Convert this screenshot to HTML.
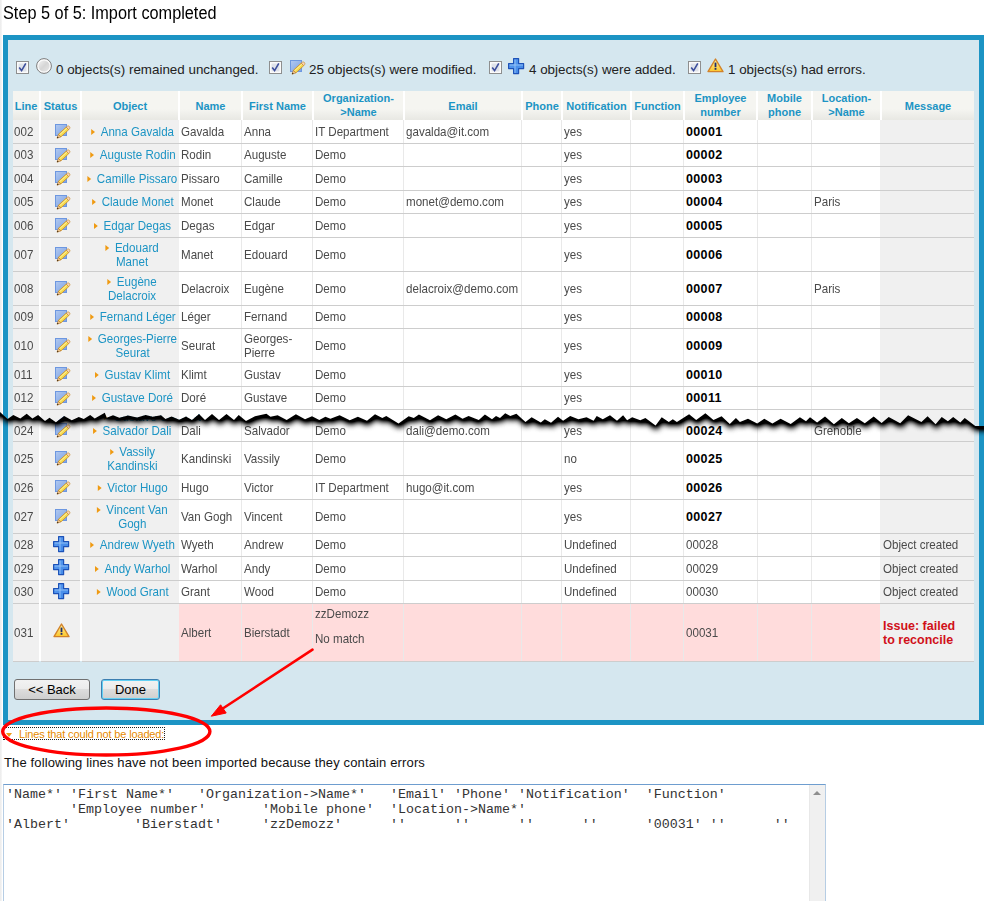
<!DOCTYPE html><html><head><meta charset="utf-8"><style>

*{margin:0;padding:0;box-sizing:border-box}
html,body{width:984px;height:901px;overflow:hidden;background:#fff}
body{position:relative;font-family:"Liberation Sans", sans-serif;color:#4a4a4a}
.a{position:absolute}
.hc{position:absolute;top:91px;height:29px;padding-top:2px;background:linear-gradient(#f5f5f1 0%,#f5f5f1 62%,#e8e8e3 100%);
  color:#1c94c4;font-weight:bold;font-size:11px;line-height:13px;text-align:center;display:flex;align-items:center;justify-content:center}
.c{position:absolute;display:flex;align-items:center;font-size:11.5px;line-height:14px;color:#4a4a4a;padding-left:1px;white-space:nowrap}
.ctr{justify-content:center;text-align:center}
.obj{color:#1c94c4;white-space:nowrap;text-align:center;justify-content:center}
.t{display:inline-block;font-size:12.2px;line-height:14px;transform:scaleX(0.95);transform-origin:0 50%}
.tc{transform-origin:50% 50%}
.tri{display:inline-block;width:0;height:0;border-left:4px solid #ef9a12;border-top:3.5px solid transparent;border-bottom:3.5px solid transparent;margin-right:6px;vertical-align:1px}
.b{font-weight:bold;color:#000;font-size:12.5px;letter-spacing:0.35px}
.sum{position:absolute;top:61px;font-size:13.4px;line-height:16px;color:#222;white-space:nowrap}

</style></head><body>
<div class="a" style="left:0;top:0;width:2px;height:901px;background:linear-gradient(90deg,#ebebeb,#f6f6f6)"></div>
<div class="a" style="left:3px;top:3px;font-size:17.5px;line-height:20px;color:#000;white-space:nowrap;transform:scaleX(0.93);transform-origin:0 50%">Step 5 of 5: Import completed</div>
<div class="a" style="left:3px;top:35px;width:981px;height:690px;border:5px solid #1c94c4;background:#d5e7ef"></div>
<div class="a" style="left:16px;top:61px"><svg width="13" height="13" viewBox="0 0 13 13" style="display:block"><rect x="0.5" y="0.5" width="12" height="12" fill="#fbfbfb" stroke="#8e8f8f"/><rect x="2.5" y="2.5" width="8" height="8" fill="#dfe3ea"/><path d="M3.2 6.4 L5.6 9.6 L9.8 2.4" fill="none" stroke="#3d4f9c" stroke-width="1.6"/></svg></div>
<div class="a" style="left:36px;top:58px"><svg width="16" height="16" viewBox="0 0 16 16" style="display:block"><defs><linearGradient id="rg" x1="0" y1="0" x2="1" y2="1"><stop offset="0" stop-color="#f2f2f2"/><stop offset="0.5" stop-color="#d6d6d6"/><stop offset="1" stop-color="#e6e6e6"/></linearGradient></defs><circle cx="8" cy="8" r="7.4" fill="#fbfbfb" stroke="#7c7c7c" stroke-width="1"/><circle cx="8" cy="8" r="5.6" fill="url(#rg)"/></svg></div>
<div class="sum" style="left:56px;top:62px">0 objects(s) remained unchanged.</div>
<div class="a" style="left:269px;top:61px"><svg width="13" height="13" viewBox="0 0 13 13" style="display:block"><rect x="0.5" y="0.5" width="12" height="12" fill="#fbfbfb" stroke="#8e8f8f"/><rect x="2.5" y="2.5" width="8" height="8" fill="#dfe3ea"/><path d="M3.2 6.4 L5.6 9.6 L9.8 2.4" fill="none" stroke="#3d4f9c" stroke-width="1.6"/></svg></div>
<div class="a" style="left:290px;top:60px"><svg width="16" height="16" viewBox="0 0 16 16" style="display:block"><defs><linearGradient id="pg1" x1="0" y1="0" x2="1" y2="1"><stop offset="0" stop-color="#b4cbf0"/><stop offset="1" stop-color="#7a9fe4"/></linearGradient></defs><rect x="0" y="0" width="12" height="12" fill="url(#pg1)"/><rect x="0.5" y="0.5" width="11" height="11" fill="none" stroke="#6d97e0" stroke-width="1"/><path d="M3.36 10.3 L11.3 3.1 L13.7 5.7 L5.8 12.96 Z" fill="#f6dc50" stroke="#c98a2a" stroke-width="0.8" stroke-linejoin="round"/><path d="M4.4 10.9 L11.9 4.1" stroke="#fff3a8" stroke-width="0.9"/><path d="M3.36 10.3 L5.8 12.96 L2 14.2 Z" fill="#f0c690" stroke="#b87828" stroke-width="0.6" stroke-linejoin="round"/><path d="M2 14.2 L2.55 12.6 L3.7 13.7 Z" fill="#2a1a08"/><path d="M11.3 3.1 L12.3 2.2 Q13.3 1.5 14.4 2.5 Q15.3 3.6 14.6 4.6 L13.7 5.7 Z" fill="#f8d4b8" stroke="#c98a2a" stroke-width="0.7"/></svg></div>
<div class="sum" style="left:309px;top:62px">25 objects(s) were modified.</div>
<div class="a" style="left:489px;top:61px"><svg width="13" height="13" viewBox="0 0 13 13" style="display:block"><rect x="0.5" y="0.5" width="12" height="12" fill="#fbfbfb" stroke="#8e8f8f"/><rect x="2.5" y="2.5" width="8" height="8" fill="#dfe3ea"/><path d="M3.2 6.4 L5.6 9.6 L9.8 2.4" fill="none" stroke="#3d4f9c" stroke-width="1.6"/></svg></div>
<div class="a" style="left:508px;top:58px"><svg width="17" height="17" viewBox="0 0 17 17" style="display:block"><defs><linearGradient id="pl2" x1="0" y1="0" x2="1" y2="1"><stop offset="0" stop-color="#5b9cf0"/><stop offset="1" stop-color="#3f86e6"/></linearGradient></defs><path d="M5.6 0.6 H10.6 V5.6 H15.6 V10.6 H10.6 V15.6 H5.6 V10.6 H0.6 V5.6 H5.6 Z" fill="url(#pl2)" stroke="#1d52b8" stroke-width="1.2" stroke-linejoin="round"/><path d="M1.6 7 H15" stroke="#9fcaf8" stroke-width="1" opacity="0.8"/><path d="M7 1.6 V15" stroke="#9fcaf8" stroke-width="1" opacity="0.8"/></svg></div>
<div class="sum" style="left:529px;top:62px">4 objects(s) were added.</div>
<div class="a" style="left:688px;top:61px"><svg width="13" height="13" viewBox="0 0 13 13" style="display:block"><rect x="0.5" y="0.5" width="12" height="12" fill="#fbfbfb" stroke="#8e8f8f"/><rect x="2.5" y="2.5" width="8" height="8" fill="#dfe3ea"/><path d="M3.2 6.4 L5.6 9.6 L9.8 2.4" fill="none" stroke="#3d4f9c" stroke-width="1.6"/></svg></div>
<div class="a" style="left:707px;top:58px"><svg width="17" height="15" viewBox="0 0 17 15" style="display:block"><defs><linearGradient id="wg3" x1="0" y1="0" x2="0" y2="1"><stop offset="0" stop-color="#fff2a0"/><stop offset="1" stop-color="#fcc62a"/></linearGradient></defs><path d="M8.5 1 L16 13.6 H1 Z" fill="url(#wg3)" stroke="#d2822a" stroke-width="1.4" stroke-linejoin="round"/><rect x="7.6" y="4.6" width="1.8" height="4.6" fill="#1e2c6e"/><rect x="7.6" y="10" width="1.8" height="1.8" fill="#1e2c6e"/></svg></div>
<div class="sum" style="left:728px;top:62px">1 objects(s) had errors.</div>
<div class="a" style="left:13px;top:91px;width:961px;height:570px;background:#fff"></div>
<div class="hc" style="left:13px;width:26px;">Line</div>
<div class="hc" style="left:41px;width:39px;">Status</div>
<div class="hc" style="left:82px;width:96px;">Object</div>
<div class="hc" style="left:180px;width:61px;">Name</div>
<div class="hc" style="left:243px;width:69px;">First Name</div>
<div class="hc" style="left:314px;width:89px;padding-top:0;line-height:13.5px">Organization-<br>&gt;Name</div>
<div class="hc" style="left:405px;width:116px;">Email</div>
<div class="hc" style="left:523px;width:38px;">Phone</div>
<div class="hc" style="left:563px;width:67px;">Notification</div>
<div class="hc" style="left:632px;width:51px;">Function</div>
<div class="hc" style="left:685px;width:71px;padding-top:0;line-height:13.5px">Employee<br>number</div>
<div class="hc" style="left:758px;width:53px;padding-top:0;line-height:13.5px">Mobile<br>phone</div>
<div class="hc" style="left:813px;width:67px;padding-top:0;line-height:13.5px">Location-<br>&gt;Name</div>
<div class="hc" style="left:882px;width:92px;">Message</div>
<div class="a" style="left:13px;top:120px;width:26px;height:23px;background:#f0f0f0"></div>
<div class="a" style="left:41px;top:120px;width:39px;height:23px;background:#f0f0f0"></div>
<div class="a" style="left:82px;top:120px;width:97px;height:23px;background:#f0f0f0"></div>
<div class="a" style="left:880px;top:120px;width:94px;height:23px;background:#f0f0f0"></div>
<div class="a" style="left:241px;top:120px;width:1px;height:23px;background:#e9e9e9"></div>
<div class="a" style="left:312px;top:120px;width:1px;height:23px;background:#e9e9e9"></div>
<div class="a" style="left:403px;top:120px;width:1px;height:23px;background:#e9e9e9"></div>
<div class="a" style="left:521px;top:120px;width:1px;height:23px;background:#e9e9e9"></div>
<div class="a" style="left:561px;top:120px;width:1px;height:23px;background:#e9e9e9"></div>
<div class="a" style="left:630px;top:120px;width:1px;height:23px;background:#e9e9e9"></div>
<div class="a" style="left:683px;top:120px;width:1px;height:23px;background:#e9e9e9"></div>
<div class="a" style="left:757px;top:120px;width:1px;height:23px;background:#e9e9e9"></div>
<div class="a" style="left:811px;top:120px;width:1px;height:23px;background:#e9e9e9"></div>
<div class="a" style="left:13px;top:143px;width:26px;height:1px;background:#cdcdcd"></div>
<div class="a" style="left:41px;top:143px;width:39px;height:1px;background:#cdcdcd"></div>
<div class="a" style="left:82px;top:143px;width:892px;height:1px;background:#cdcdcd"></div>
<div class="c" style="left:13px;top:120px;width:26px;height:23px;"><span class="t">002</span></div>
<div class="a" style="left:55px;top:124px"><svg width="16" height="16" viewBox="0 0 16 16" style="display:block"><defs><linearGradient id="pg4" x1="0" y1="0" x2="1" y2="1"><stop offset="0" stop-color="#b4cbf0"/><stop offset="1" stop-color="#7a9fe4"/></linearGradient></defs><rect x="0" y="0" width="12" height="12" fill="url(#pg4)"/><rect x="0.5" y="0.5" width="11" height="11" fill="none" stroke="#6d97e0" stroke-width="1"/><path d="M3.36 10.3 L11.3 3.1 L13.7 5.7 L5.8 12.96 Z" fill="#f6dc50" stroke="#c98a2a" stroke-width="0.8" stroke-linejoin="round"/><path d="M4.4 10.9 L11.9 4.1" stroke="#fff3a8" stroke-width="0.9"/><path d="M3.36 10.3 L5.8 12.96 L2 14.2 Z" fill="#f0c690" stroke="#b87828" stroke-width="0.6" stroke-linejoin="round"/><path d="M2 14.2 L2.55 12.6 L3.7 13.7 Z" fill="#2a1a08"/><path d="M11.3 3.1 L12.3 2.2 Q13.3 1.5 14.4 2.5 Q15.3 3.6 14.6 4.6 L13.7 5.7 Z" fill="#f8d4b8" stroke="#c98a2a" stroke-width="0.7"/></svg></div>
<div class="c obj" style="left:82px;top:120px;width:97px;height:23px;padding:0 0 0 4px;"><span class="t tc"><span class="tri"></span>Anna Gavalda</span></div>
<div class="c" style="left:180px;top:120px;width:61px;height:23px;"><span class="t">Gavalda</span></div>
<div class="c" style="left:243px;top:120px;width:69px;height:23px;"><span class="t">Anna</span></div>
<div class="c" style="left:314px;top:120px;width:89px;height:23px;"><span class="t">IT Department</span></div>
<div class="c" style="left:405px;top:120px;width:116px;height:23px;"><span class="t">gavalda@it.com</span></div>
<div class="c" style="left:563px;top:120px;width:67px;height:23px;"><span class="t">yes</span></div>
<div class="c" style="left:685px;top:120px;width:72px;height:23px;"><span class="b">00001</span></div>
<div class="c" style="left:813px;top:120px;width:67px;height:23px;"></div>
<div class="c" style="left:882px;top:120px;width:92px;height:23px;"></div>
<div class="a" style="left:13px;top:144px;width:26px;height:22px;background:#f0f0f0"></div>
<div class="a" style="left:41px;top:144px;width:39px;height:22px;background:#f0f0f0"></div>
<div class="a" style="left:82px;top:144px;width:97px;height:22px;background:#f0f0f0"></div>
<div class="a" style="left:880px;top:144px;width:94px;height:22px;background:#f0f0f0"></div>
<div class="a" style="left:241px;top:144px;width:1px;height:22px;background:#e9e9e9"></div>
<div class="a" style="left:312px;top:144px;width:1px;height:22px;background:#e9e9e9"></div>
<div class="a" style="left:403px;top:144px;width:1px;height:22px;background:#e9e9e9"></div>
<div class="a" style="left:521px;top:144px;width:1px;height:22px;background:#e9e9e9"></div>
<div class="a" style="left:561px;top:144px;width:1px;height:22px;background:#e9e9e9"></div>
<div class="a" style="left:630px;top:144px;width:1px;height:22px;background:#e9e9e9"></div>
<div class="a" style="left:683px;top:144px;width:1px;height:22px;background:#e9e9e9"></div>
<div class="a" style="left:757px;top:144px;width:1px;height:22px;background:#e9e9e9"></div>
<div class="a" style="left:811px;top:144px;width:1px;height:22px;background:#e9e9e9"></div>
<div class="a" style="left:13px;top:166px;width:26px;height:1px;background:#cdcdcd"></div>
<div class="a" style="left:41px;top:166px;width:39px;height:1px;background:#cdcdcd"></div>
<div class="a" style="left:82px;top:166px;width:892px;height:1px;background:#cdcdcd"></div>
<div class="c" style="left:13px;top:144px;width:26px;height:22px;"><span class="t">003</span></div>
<div class="a" style="left:55px;top:148px"><svg width="16" height="16" viewBox="0 0 16 16" style="display:block"><defs><linearGradient id="pg5" x1="0" y1="0" x2="1" y2="1"><stop offset="0" stop-color="#b4cbf0"/><stop offset="1" stop-color="#7a9fe4"/></linearGradient></defs><rect x="0" y="0" width="12" height="12" fill="url(#pg5)"/><rect x="0.5" y="0.5" width="11" height="11" fill="none" stroke="#6d97e0" stroke-width="1"/><path d="M3.36 10.3 L11.3 3.1 L13.7 5.7 L5.8 12.96 Z" fill="#f6dc50" stroke="#c98a2a" stroke-width="0.8" stroke-linejoin="round"/><path d="M4.4 10.9 L11.9 4.1" stroke="#fff3a8" stroke-width="0.9"/><path d="M3.36 10.3 L5.8 12.96 L2 14.2 Z" fill="#f0c690" stroke="#b87828" stroke-width="0.6" stroke-linejoin="round"/><path d="M2 14.2 L2.55 12.6 L3.7 13.7 Z" fill="#2a1a08"/><path d="M11.3 3.1 L12.3 2.2 Q13.3 1.5 14.4 2.5 Q15.3 3.6 14.6 4.6 L13.7 5.7 Z" fill="#f8d4b8" stroke="#c98a2a" stroke-width="0.7"/></svg></div>
<div class="c obj" style="left:82px;top:144px;width:97px;height:22px;padding:0 0 0 4px;"><span class="t tc"><span class="tri"></span>Auguste Rodin</span></div>
<div class="c" style="left:180px;top:144px;width:61px;height:22px;"><span class="t">Rodin</span></div>
<div class="c" style="left:243px;top:144px;width:69px;height:22px;"><span class="t">Auguste</span></div>
<div class="c" style="left:314px;top:144px;width:89px;height:22px;"><span class="t">Demo</span></div>
<div class="c" style="left:405px;top:144px;width:116px;height:22px;"></div>
<div class="c" style="left:563px;top:144px;width:67px;height:22px;"><span class="t">yes</span></div>
<div class="c" style="left:685px;top:144px;width:72px;height:22px;"><span class="b">00002</span></div>
<div class="c" style="left:813px;top:144px;width:67px;height:22px;"></div>
<div class="c" style="left:882px;top:144px;width:92px;height:22px;"></div>
<div class="a" style="left:13px;top:167px;width:26px;height:23px;background:#f0f0f0"></div>
<div class="a" style="left:41px;top:167px;width:39px;height:23px;background:#f0f0f0"></div>
<div class="a" style="left:82px;top:167px;width:97px;height:23px;background:#f0f0f0"></div>
<div class="a" style="left:880px;top:167px;width:94px;height:23px;background:#f0f0f0"></div>
<div class="a" style="left:241px;top:167px;width:1px;height:23px;background:#e9e9e9"></div>
<div class="a" style="left:312px;top:167px;width:1px;height:23px;background:#e9e9e9"></div>
<div class="a" style="left:403px;top:167px;width:1px;height:23px;background:#e9e9e9"></div>
<div class="a" style="left:521px;top:167px;width:1px;height:23px;background:#e9e9e9"></div>
<div class="a" style="left:561px;top:167px;width:1px;height:23px;background:#e9e9e9"></div>
<div class="a" style="left:630px;top:167px;width:1px;height:23px;background:#e9e9e9"></div>
<div class="a" style="left:683px;top:167px;width:1px;height:23px;background:#e9e9e9"></div>
<div class="a" style="left:757px;top:167px;width:1px;height:23px;background:#e9e9e9"></div>
<div class="a" style="left:811px;top:167px;width:1px;height:23px;background:#e9e9e9"></div>
<div class="a" style="left:13px;top:190px;width:26px;height:1px;background:#cdcdcd"></div>
<div class="a" style="left:41px;top:190px;width:39px;height:1px;background:#cdcdcd"></div>
<div class="a" style="left:82px;top:190px;width:892px;height:1px;background:#cdcdcd"></div>
<div class="c" style="left:13px;top:167px;width:26px;height:23px;"><span class="t">004</span></div>
<div class="a" style="left:55px;top:171px"><svg width="16" height="16" viewBox="0 0 16 16" style="display:block"><defs><linearGradient id="pg6" x1="0" y1="0" x2="1" y2="1"><stop offset="0" stop-color="#b4cbf0"/><stop offset="1" stop-color="#7a9fe4"/></linearGradient></defs><rect x="0" y="0" width="12" height="12" fill="url(#pg6)"/><rect x="0.5" y="0.5" width="11" height="11" fill="none" stroke="#6d97e0" stroke-width="1"/><path d="M3.36 10.3 L11.3 3.1 L13.7 5.7 L5.8 12.96 Z" fill="#f6dc50" stroke="#c98a2a" stroke-width="0.8" stroke-linejoin="round"/><path d="M4.4 10.9 L11.9 4.1" stroke="#fff3a8" stroke-width="0.9"/><path d="M3.36 10.3 L5.8 12.96 L2 14.2 Z" fill="#f0c690" stroke="#b87828" stroke-width="0.6" stroke-linejoin="round"/><path d="M2 14.2 L2.55 12.6 L3.7 13.7 Z" fill="#2a1a08"/><path d="M11.3 3.1 L12.3 2.2 Q13.3 1.5 14.4 2.5 Q15.3 3.6 14.6 4.6 L13.7 5.7 Z" fill="#f8d4b8" stroke="#c98a2a" stroke-width="0.7"/></svg></div>
<div class="c obj" style="left:82px;top:167px;width:97px;height:23px;padding:0 0 0 4px;"><span class="t tc"><span class="tri"></span>Camille Pissaro</span></div>
<div class="c" style="left:180px;top:167px;width:61px;height:23px;"><span class="t">Pissaro</span></div>
<div class="c" style="left:243px;top:167px;width:69px;height:23px;"><span class="t">Camille</span></div>
<div class="c" style="left:314px;top:167px;width:89px;height:23px;"><span class="t">Demo</span></div>
<div class="c" style="left:405px;top:167px;width:116px;height:23px;"></div>
<div class="c" style="left:563px;top:167px;width:67px;height:23px;"><span class="t">yes</span></div>
<div class="c" style="left:685px;top:167px;width:72px;height:23px;"><span class="b">00003</span></div>
<div class="c" style="left:813px;top:167px;width:67px;height:23px;"></div>
<div class="c" style="left:882px;top:167px;width:92px;height:23px;"></div>
<div class="a" style="left:13px;top:191px;width:26px;height:22px;background:#f0f0f0"></div>
<div class="a" style="left:41px;top:191px;width:39px;height:22px;background:#f0f0f0"></div>
<div class="a" style="left:82px;top:191px;width:97px;height:22px;background:#f0f0f0"></div>
<div class="a" style="left:880px;top:191px;width:94px;height:22px;background:#f0f0f0"></div>
<div class="a" style="left:241px;top:191px;width:1px;height:22px;background:#e9e9e9"></div>
<div class="a" style="left:312px;top:191px;width:1px;height:22px;background:#e9e9e9"></div>
<div class="a" style="left:403px;top:191px;width:1px;height:22px;background:#e9e9e9"></div>
<div class="a" style="left:521px;top:191px;width:1px;height:22px;background:#e9e9e9"></div>
<div class="a" style="left:561px;top:191px;width:1px;height:22px;background:#e9e9e9"></div>
<div class="a" style="left:630px;top:191px;width:1px;height:22px;background:#e9e9e9"></div>
<div class="a" style="left:683px;top:191px;width:1px;height:22px;background:#e9e9e9"></div>
<div class="a" style="left:757px;top:191px;width:1px;height:22px;background:#e9e9e9"></div>
<div class="a" style="left:811px;top:191px;width:1px;height:22px;background:#e9e9e9"></div>
<div class="a" style="left:13px;top:213px;width:26px;height:1px;background:#cdcdcd"></div>
<div class="a" style="left:41px;top:213px;width:39px;height:1px;background:#cdcdcd"></div>
<div class="a" style="left:82px;top:213px;width:892px;height:1px;background:#cdcdcd"></div>
<div class="c" style="left:13px;top:191px;width:26px;height:22px;"><span class="t">005</span></div>
<div class="a" style="left:55px;top:195px"><svg width="16" height="16" viewBox="0 0 16 16" style="display:block"><defs><linearGradient id="pg7" x1="0" y1="0" x2="1" y2="1"><stop offset="0" stop-color="#b4cbf0"/><stop offset="1" stop-color="#7a9fe4"/></linearGradient></defs><rect x="0" y="0" width="12" height="12" fill="url(#pg7)"/><rect x="0.5" y="0.5" width="11" height="11" fill="none" stroke="#6d97e0" stroke-width="1"/><path d="M3.36 10.3 L11.3 3.1 L13.7 5.7 L5.8 12.96 Z" fill="#f6dc50" stroke="#c98a2a" stroke-width="0.8" stroke-linejoin="round"/><path d="M4.4 10.9 L11.9 4.1" stroke="#fff3a8" stroke-width="0.9"/><path d="M3.36 10.3 L5.8 12.96 L2 14.2 Z" fill="#f0c690" stroke="#b87828" stroke-width="0.6" stroke-linejoin="round"/><path d="M2 14.2 L2.55 12.6 L3.7 13.7 Z" fill="#2a1a08"/><path d="M11.3 3.1 L12.3 2.2 Q13.3 1.5 14.4 2.5 Q15.3 3.6 14.6 4.6 L13.7 5.7 Z" fill="#f8d4b8" stroke="#c98a2a" stroke-width="0.7"/></svg></div>
<div class="c obj" style="left:82px;top:191px;width:97px;height:22px;padding:0 0 0 4px;"><span class="t tc"><span class="tri"></span>Claude Monet</span></div>
<div class="c" style="left:180px;top:191px;width:61px;height:22px;"><span class="t">Monet</span></div>
<div class="c" style="left:243px;top:191px;width:69px;height:22px;"><span class="t">Claude</span></div>
<div class="c" style="left:314px;top:191px;width:89px;height:22px;"><span class="t">Demo</span></div>
<div class="c" style="left:405px;top:191px;width:116px;height:22px;"><span class="t">monet@demo.com</span></div>
<div class="c" style="left:563px;top:191px;width:67px;height:22px;"><span class="t">yes</span></div>
<div class="c" style="left:685px;top:191px;width:72px;height:22px;"><span class="b">00004</span></div>
<div class="c" style="left:813px;top:191px;width:67px;height:22px;"><span class="t">Paris</span></div>
<div class="c" style="left:882px;top:191px;width:92px;height:22px;"></div>
<div class="a" style="left:13px;top:214px;width:26px;height:23px;background:#f0f0f0"></div>
<div class="a" style="left:41px;top:214px;width:39px;height:23px;background:#f0f0f0"></div>
<div class="a" style="left:82px;top:214px;width:97px;height:23px;background:#f0f0f0"></div>
<div class="a" style="left:880px;top:214px;width:94px;height:23px;background:#f0f0f0"></div>
<div class="a" style="left:241px;top:214px;width:1px;height:23px;background:#e9e9e9"></div>
<div class="a" style="left:312px;top:214px;width:1px;height:23px;background:#e9e9e9"></div>
<div class="a" style="left:403px;top:214px;width:1px;height:23px;background:#e9e9e9"></div>
<div class="a" style="left:521px;top:214px;width:1px;height:23px;background:#e9e9e9"></div>
<div class="a" style="left:561px;top:214px;width:1px;height:23px;background:#e9e9e9"></div>
<div class="a" style="left:630px;top:214px;width:1px;height:23px;background:#e9e9e9"></div>
<div class="a" style="left:683px;top:214px;width:1px;height:23px;background:#e9e9e9"></div>
<div class="a" style="left:757px;top:214px;width:1px;height:23px;background:#e9e9e9"></div>
<div class="a" style="left:811px;top:214px;width:1px;height:23px;background:#e9e9e9"></div>
<div class="a" style="left:13px;top:237px;width:26px;height:1px;background:#cdcdcd"></div>
<div class="a" style="left:41px;top:237px;width:39px;height:1px;background:#cdcdcd"></div>
<div class="a" style="left:82px;top:237px;width:892px;height:1px;background:#cdcdcd"></div>
<div class="c" style="left:13px;top:214px;width:26px;height:23px;"><span class="t">006</span></div>
<div class="a" style="left:55px;top:218px"><svg width="16" height="16" viewBox="0 0 16 16" style="display:block"><defs><linearGradient id="pg8" x1="0" y1="0" x2="1" y2="1"><stop offset="0" stop-color="#b4cbf0"/><stop offset="1" stop-color="#7a9fe4"/></linearGradient></defs><rect x="0" y="0" width="12" height="12" fill="url(#pg8)"/><rect x="0.5" y="0.5" width="11" height="11" fill="none" stroke="#6d97e0" stroke-width="1"/><path d="M3.36 10.3 L11.3 3.1 L13.7 5.7 L5.8 12.96 Z" fill="#f6dc50" stroke="#c98a2a" stroke-width="0.8" stroke-linejoin="round"/><path d="M4.4 10.9 L11.9 4.1" stroke="#fff3a8" stroke-width="0.9"/><path d="M3.36 10.3 L5.8 12.96 L2 14.2 Z" fill="#f0c690" stroke="#b87828" stroke-width="0.6" stroke-linejoin="round"/><path d="M2 14.2 L2.55 12.6 L3.7 13.7 Z" fill="#2a1a08"/><path d="M11.3 3.1 L12.3 2.2 Q13.3 1.5 14.4 2.5 Q15.3 3.6 14.6 4.6 L13.7 5.7 Z" fill="#f8d4b8" stroke="#c98a2a" stroke-width="0.7"/></svg></div>
<div class="c obj" style="left:82px;top:214px;width:97px;height:23px;padding:0 0 0 4px;"><span class="t tc"><span class="tri"></span>Edgar Degas</span></div>
<div class="c" style="left:180px;top:214px;width:61px;height:23px;"><span class="t">Degas</span></div>
<div class="c" style="left:243px;top:214px;width:69px;height:23px;"><span class="t">Edgar</span></div>
<div class="c" style="left:314px;top:214px;width:89px;height:23px;"><span class="t">Demo</span></div>
<div class="c" style="left:405px;top:214px;width:116px;height:23px;"></div>
<div class="c" style="left:563px;top:214px;width:67px;height:23px;"><span class="t">yes</span></div>
<div class="c" style="left:685px;top:214px;width:72px;height:23px;"><span class="b">00005</span></div>
<div class="c" style="left:813px;top:214px;width:67px;height:23px;"></div>
<div class="c" style="left:882px;top:214px;width:92px;height:23px;"></div>
<div class="a" style="left:13px;top:238px;width:26px;height:33px;background:#f0f0f0"></div>
<div class="a" style="left:41px;top:238px;width:39px;height:33px;background:#f0f0f0"></div>
<div class="a" style="left:82px;top:238px;width:97px;height:33px;background:#f0f0f0"></div>
<div class="a" style="left:880px;top:238px;width:94px;height:33px;background:#f0f0f0"></div>
<div class="a" style="left:241px;top:238px;width:1px;height:33px;background:#e9e9e9"></div>
<div class="a" style="left:312px;top:238px;width:1px;height:33px;background:#e9e9e9"></div>
<div class="a" style="left:403px;top:238px;width:1px;height:33px;background:#e9e9e9"></div>
<div class="a" style="left:521px;top:238px;width:1px;height:33px;background:#e9e9e9"></div>
<div class="a" style="left:561px;top:238px;width:1px;height:33px;background:#e9e9e9"></div>
<div class="a" style="left:630px;top:238px;width:1px;height:33px;background:#e9e9e9"></div>
<div class="a" style="left:683px;top:238px;width:1px;height:33px;background:#e9e9e9"></div>
<div class="a" style="left:757px;top:238px;width:1px;height:33px;background:#e9e9e9"></div>
<div class="a" style="left:811px;top:238px;width:1px;height:33px;background:#e9e9e9"></div>
<div class="a" style="left:13px;top:271px;width:26px;height:1px;background:#cdcdcd"></div>
<div class="a" style="left:41px;top:271px;width:39px;height:1px;background:#cdcdcd"></div>
<div class="a" style="left:82px;top:271px;width:892px;height:1px;background:#cdcdcd"></div>
<div class="c" style="left:13px;top:238px;width:26px;height:33px;"><span class="t">007</span></div>
<div class="a" style="left:55px;top:247px"><svg width="16" height="16" viewBox="0 0 16 16" style="display:block"><defs><linearGradient id="pg9" x1="0" y1="0" x2="1" y2="1"><stop offset="0" stop-color="#b4cbf0"/><stop offset="1" stop-color="#7a9fe4"/></linearGradient></defs><rect x="0" y="0" width="12" height="12" fill="url(#pg9)"/><rect x="0.5" y="0.5" width="11" height="11" fill="none" stroke="#6d97e0" stroke-width="1"/><path d="M3.36 10.3 L11.3 3.1 L13.7 5.7 L5.8 12.96 Z" fill="#f6dc50" stroke="#c98a2a" stroke-width="0.8" stroke-linejoin="round"/><path d="M4.4 10.9 L11.9 4.1" stroke="#fff3a8" stroke-width="0.9"/><path d="M3.36 10.3 L5.8 12.96 L2 14.2 Z" fill="#f0c690" stroke="#b87828" stroke-width="0.6" stroke-linejoin="round"/><path d="M2 14.2 L2.55 12.6 L3.7 13.7 Z" fill="#2a1a08"/><path d="M11.3 3.1 L12.3 2.2 Q13.3 1.5 14.4 2.5 Q15.3 3.6 14.6 4.6 L13.7 5.7 Z" fill="#f8d4b8" stroke="#c98a2a" stroke-width="0.7"/></svg></div>
<div class="c obj" style="left:82px;top:238px;width:97px;height:33px;padding:0 0 0 4px;"><span class="t tc"><span class="tri"></span>Edouard<br>Manet</span></div>
<div class="c" style="left:180px;top:238px;width:61px;height:33px;"><span class="t">Manet</span></div>
<div class="c" style="left:243px;top:238px;width:69px;height:33px;"><span class="t">Edouard</span></div>
<div class="c" style="left:314px;top:238px;width:89px;height:33px;"><span class="t">Demo</span></div>
<div class="c" style="left:405px;top:238px;width:116px;height:33px;"></div>
<div class="c" style="left:563px;top:238px;width:67px;height:33px;"><span class="t">yes</span></div>
<div class="c" style="left:685px;top:238px;width:72px;height:33px;"><span class="b">00006</span></div>
<div class="c" style="left:813px;top:238px;width:67px;height:33px;"></div>
<div class="c" style="left:882px;top:238px;width:92px;height:33px;"></div>
<div class="a" style="left:13px;top:272px;width:26px;height:33px;background:#f0f0f0"></div>
<div class="a" style="left:41px;top:272px;width:39px;height:33px;background:#f0f0f0"></div>
<div class="a" style="left:82px;top:272px;width:97px;height:33px;background:#f0f0f0"></div>
<div class="a" style="left:880px;top:272px;width:94px;height:33px;background:#f0f0f0"></div>
<div class="a" style="left:241px;top:272px;width:1px;height:33px;background:#e9e9e9"></div>
<div class="a" style="left:312px;top:272px;width:1px;height:33px;background:#e9e9e9"></div>
<div class="a" style="left:403px;top:272px;width:1px;height:33px;background:#e9e9e9"></div>
<div class="a" style="left:521px;top:272px;width:1px;height:33px;background:#e9e9e9"></div>
<div class="a" style="left:561px;top:272px;width:1px;height:33px;background:#e9e9e9"></div>
<div class="a" style="left:630px;top:272px;width:1px;height:33px;background:#e9e9e9"></div>
<div class="a" style="left:683px;top:272px;width:1px;height:33px;background:#e9e9e9"></div>
<div class="a" style="left:757px;top:272px;width:1px;height:33px;background:#e9e9e9"></div>
<div class="a" style="left:811px;top:272px;width:1px;height:33px;background:#e9e9e9"></div>
<div class="a" style="left:13px;top:305px;width:26px;height:1px;background:#cdcdcd"></div>
<div class="a" style="left:41px;top:305px;width:39px;height:1px;background:#cdcdcd"></div>
<div class="a" style="left:82px;top:305px;width:892px;height:1px;background:#cdcdcd"></div>
<div class="c" style="left:13px;top:272px;width:26px;height:33px;"><span class="t">008</span></div>
<div class="a" style="left:55px;top:281px"><svg width="16" height="16" viewBox="0 0 16 16" style="display:block"><defs><linearGradient id="pg10" x1="0" y1="0" x2="1" y2="1"><stop offset="0" stop-color="#b4cbf0"/><stop offset="1" stop-color="#7a9fe4"/></linearGradient></defs><rect x="0" y="0" width="12" height="12" fill="url(#pg10)"/><rect x="0.5" y="0.5" width="11" height="11" fill="none" stroke="#6d97e0" stroke-width="1"/><path d="M3.36 10.3 L11.3 3.1 L13.7 5.7 L5.8 12.96 Z" fill="#f6dc50" stroke="#c98a2a" stroke-width="0.8" stroke-linejoin="round"/><path d="M4.4 10.9 L11.9 4.1" stroke="#fff3a8" stroke-width="0.9"/><path d="M3.36 10.3 L5.8 12.96 L2 14.2 Z" fill="#f0c690" stroke="#b87828" stroke-width="0.6" stroke-linejoin="round"/><path d="M2 14.2 L2.55 12.6 L3.7 13.7 Z" fill="#2a1a08"/><path d="M11.3 3.1 L12.3 2.2 Q13.3 1.5 14.4 2.5 Q15.3 3.6 14.6 4.6 L13.7 5.7 Z" fill="#f8d4b8" stroke="#c98a2a" stroke-width="0.7"/></svg></div>
<div class="c obj" style="left:82px;top:272px;width:97px;height:33px;padding:0 0 0 4px;"><span class="t tc"><span class="tri"></span>Eugène<br>Delacroix</span></div>
<div class="c" style="left:180px;top:272px;width:61px;height:33px;"><span class="t">Delacroix</span></div>
<div class="c" style="left:243px;top:272px;width:69px;height:33px;"><span class="t">Eugène</span></div>
<div class="c" style="left:314px;top:272px;width:89px;height:33px;"><span class="t">Demo</span></div>
<div class="c" style="left:405px;top:272px;width:116px;height:33px;"><span class="t">delacroix@demo.com</span></div>
<div class="c" style="left:563px;top:272px;width:67px;height:33px;"><span class="t">yes</span></div>
<div class="c" style="left:685px;top:272px;width:72px;height:33px;"><span class="b">00007</span></div>
<div class="c" style="left:813px;top:272px;width:67px;height:33px;"><span class="t">Paris</span></div>
<div class="c" style="left:882px;top:272px;width:92px;height:33px;"></div>
<div class="a" style="left:13px;top:306px;width:26px;height:22px;background:#f0f0f0"></div>
<div class="a" style="left:41px;top:306px;width:39px;height:22px;background:#f0f0f0"></div>
<div class="a" style="left:82px;top:306px;width:97px;height:22px;background:#f0f0f0"></div>
<div class="a" style="left:880px;top:306px;width:94px;height:22px;background:#f0f0f0"></div>
<div class="a" style="left:241px;top:306px;width:1px;height:22px;background:#e9e9e9"></div>
<div class="a" style="left:312px;top:306px;width:1px;height:22px;background:#e9e9e9"></div>
<div class="a" style="left:403px;top:306px;width:1px;height:22px;background:#e9e9e9"></div>
<div class="a" style="left:521px;top:306px;width:1px;height:22px;background:#e9e9e9"></div>
<div class="a" style="left:561px;top:306px;width:1px;height:22px;background:#e9e9e9"></div>
<div class="a" style="left:630px;top:306px;width:1px;height:22px;background:#e9e9e9"></div>
<div class="a" style="left:683px;top:306px;width:1px;height:22px;background:#e9e9e9"></div>
<div class="a" style="left:757px;top:306px;width:1px;height:22px;background:#e9e9e9"></div>
<div class="a" style="left:811px;top:306px;width:1px;height:22px;background:#e9e9e9"></div>
<div class="a" style="left:13px;top:328px;width:26px;height:1px;background:#cdcdcd"></div>
<div class="a" style="left:41px;top:328px;width:39px;height:1px;background:#cdcdcd"></div>
<div class="a" style="left:82px;top:328px;width:892px;height:1px;background:#cdcdcd"></div>
<div class="c" style="left:13px;top:306px;width:26px;height:22px;"><span class="t">009</span></div>
<div class="a" style="left:55px;top:310px"><svg width="16" height="16" viewBox="0 0 16 16" style="display:block"><defs><linearGradient id="pg11" x1="0" y1="0" x2="1" y2="1"><stop offset="0" stop-color="#b4cbf0"/><stop offset="1" stop-color="#7a9fe4"/></linearGradient></defs><rect x="0" y="0" width="12" height="12" fill="url(#pg11)"/><rect x="0.5" y="0.5" width="11" height="11" fill="none" stroke="#6d97e0" stroke-width="1"/><path d="M3.36 10.3 L11.3 3.1 L13.7 5.7 L5.8 12.96 Z" fill="#f6dc50" stroke="#c98a2a" stroke-width="0.8" stroke-linejoin="round"/><path d="M4.4 10.9 L11.9 4.1" stroke="#fff3a8" stroke-width="0.9"/><path d="M3.36 10.3 L5.8 12.96 L2 14.2 Z" fill="#f0c690" stroke="#b87828" stroke-width="0.6" stroke-linejoin="round"/><path d="M2 14.2 L2.55 12.6 L3.7 13.7 Z" fill="#2a1a08"/><path d="M11.3 3.1 L12.3 2.2 Q13.3 1.5 14.4 2.5 Q15.3 3.6 14.6 4.6 L13.7 5.7 Z" fill="#f8d4b8" stroke="#c98a2a" stroke-width="0.7"/></svg></div>
<div class="c obj" style="left:82px;top:306px;width:97px;height:22px;padding:0 0 0 4px;"><span class="t tc"><span class="tri"></span>Fernand Léger</span></div>
<div class="c" style="left:180px;top:306px;width:61px;height:22px;"><span class="t">Léger</span></div>
<div class="c" style="left:243px;top:306px;width:69px;height:22px;"><span class="t">Fernand</span></div>
<div class="c" style="left:314px;top:306px;width:89px;height:22px;"><span class="t">Demo</span></div>
<div class="c" style="left:405px;top:306px;width:116px;height:22px;"></div>
<div class="c" style="left:563px;top:306px;width:67px;height:22px;"><span class="t">yes</span></div>
<div class="c" style="left:685px;top:306px;width:72px;height:22px;"><span class="b">00008</span></div>
<div class="c" style="left:813px;top:306px;width:67px;height:22px;"></div>
<div class="c" style="left:882px;top:306px;width:92px;height:22px;"></div>
<div class="a" style="left:13px;top:329px;width:26px;height:33px;background:#f0f0f0"></div>
<div class="a" style="left:41px;top:329px;width:39px;height:33px;background:#f0f0f0"></div>
<div class="a" style="left:82px;top:329px;width:97px;height:33px;background:#f0f0f0"></div>
<div class="a" style="left:880px;top:329px;width:94px;height:33px;background:#f0f0f0"></div>
<div class="a" style="left:241px;top:329px;width:1px;height:33px;background:#e9e9e9"></div>
<div class="a" style="left:312px;top:329px;width:1px;height:33px;background:#e9e9e9"></div>
<div class="a" style="left:403px;top:329px;width:1px;height:33px;background:#e9e9e9"></div>
<div class="a" style="left:521px;top:329px;width:1px;height:33px;background:#e9e9e9"></div>
<div class="a" style="left:561px;top:329px;width:1px;height:33px;background:#e9e9e9"></div>
<div class="a" style="left:630px;top:329px;width:1px;height:33px;background:#e9e9e9"></div>
<div class="a" style="left:683px;top:329px;width:1px;height:33px;background:#e9e9e9"></div>
<div class="a" style="left:757px;top:329px;width:1px;height:33px;background:#e9e9e9"></div>
<div class="a" style="left:811px;top:329px;width:1px;height:33px;background:#e9e9e9"></div>
<div class="a" style="left:13px;top:362px;width:26px;height:1px;background:#cdcdcd"></div>
<div class="a" style="left:41px;top:362px;width:39px;height:1px;background:#cdcdcd"></div>
<div class="a" style="left:82px;top:362px;width:892px;height:1px;background:#cdcdcd"></div>
<div class="c" style="left:13px;top:329px;width:26px;height:33px;"><span class="t">010</span></div>
<div class="a" style="left:55px;top:338px"><svg width="16" height="16" viewBox="0 0 16 16" style="display:block"><defs><linearGradient id="pg12" x1="0" y1="0" x2="1" y2="1"><stop offset="0" stop-color="#b4cbf0"/><stop offset="1" stop-color="#7a9fe4"/></linearGradient></defs><rect x="0" y="0" width="12" height="12" fill="url(#pg12)"/><rect x="0.5" y="0.5" width="11" height="11" fill="none" stroke="#6d97e0" stroke-width="1"/><path d="M3.36 10.3 L11.3 3.1 L13.7 5.7 L5.8 12.96 Z" fill="#f6dc50" stroke="#c98a2a" stroke-width="0.8" stroke-linejoin="round"/><path d="M4.4 10.9 L11.9 4.1" stroke="#fff3a8" stroke-width="0.9"/><path d="M3.36 10.3 L5.8 12.96 L2 14.2 Z" fill="#f0c690" stroke="#b87828" stroke-width="0.6" stroke-linejoin="round"/><path d="M2 14.2 L2.55 12.6 L3.7 13.7 Z" fill="#2a1a08"/><path d="M11.3 3.1 L12.3 2.2 Q13.3 1.5 14.4 2.5 Q15.3 3.6 14.6 4.6 L13.7 5.7 Z" fill="#f8d4b8" stroke="#c98a2a" stroke-width="0.7"/></svg></div>
<div class="c obj" style="left:82px;top:329px;width:97px;height:33px;padding:0 0 0 4px;"><span class="t tc"><span class="tri"></span>Georges-Pierre<br>Seurat</span></div>
<div class="c" style="left:180px;top:329px;width:61px;height:33px;"><span class="t">Seurat</span></div>
<div class="c" style="left:243px;top:329px;width:69px;height:33px;"><span class="t">Georges-<br>Pierre</span></div>
<div class="c" style="left:314px;top:329px;width:89px;height:33px;"><span class="t">Demo</span></div>
<div class="c" style="left:405px;top:329px;width:116px;height:33px;"></div>
<div class="c" style="left:563px;top:329px;width:67px;height:33px;"><span class="t">yes</span></div>
<div class="c" style="left:685px;top:329px;width:72px;height:33px;"><span class="b">00009</span></div>
<div class="c" style="left:813px;top:329px;width:67px;height:33px;"></div>
<div class="c" style="left:882px;top:329px;width:92px;height:33px;"></div>
<div class="a" style="left:13px;top:363px;width:26px;height:23px;background:#f0f0f0"></div>
<div class="a" style="left:41px;top:363px;width:39px;height:23px;background:#f0f0f0"></div>
<div class="a" style="left:82px;top:363px;width:97px;height:23px;background:#f0f0f0"></div>
<div class="a" style="left:880px;top:363px;width:94px;height:23px;background:#f0f0f0"></div>
<div class="a" style="left:241px;top:363px;width:1px;height:23px;background:#e9e9e9"></div>
<div class="a" style="left:312px;top:363px;width:1px;height:23px;background:#e9e9e9"></div>
<div class="a" style="left:403px;top:363px;width:1px;height:23px;background:#e9e9e9"></div>
<div class="a" style="left:521px;top:363px;width:1px;height:23px;background:#e9e9e9"></div>
<div class="a" style="left:561px;top:363px;width:1px;height:23px;background:#e9e9e9"></div>
<div class="a" style="left:630px;top:363px;width:1px;height:23px;background:#e9e9e9"></div>
<div class="a" style="left:683px;top:363px;width:1px;height:23px;background:#e9e9e9"></div>
<div class="a" style="left:757px;top:363px;width:1px;height:23px;background:#e9e9e9"></div>
<div class="a" style="left:811px;top:363px;width:1px;height:23px;background:#e9e9e9"></div>
<div class="a" style="left:13px;top:386px;width:26px;height:1px;background:#cdcdcd"></div>
<div class="a" style="left:41px;top:386px;width:39px;height:1px;background:#cdcdcd"></div>
<div class="a" style="left:82px;top:386px;width:892px;height:1px;background:#cdcdcd"></div>
<div class="c" style="left:13px;top:363px;width:26px;height:23px;"><span class="t">011</span></div>
<div class="a" style="left:55px;top:367px"><svg width="16" height="16" viewBox="0 0 16 16" style="display:block"><defs><linearGradient id="pg13" x1="0" y1="0" x2="1" y2="1"><stop offset="0" stop-color="#b4cbf0"/><stop offset="1" stop-color="#7a9fe4"/></linearGradient></defs><rect x="0" y="0" width="12" height="12" fill="url(#pg13)"/><rect x="0.5" y="0.5" width="11" height="11" fill="none" stroke="#6d97e0" stroke-width="1"/><path d="M3.36 10.3 L11.3 3.1 L13.7 5.7 L5.8 12.96 Z" fill="#f6dc50" stroke="#c98a2a" stroke-width="0.8" stroke-linejoin="round"/><path d="M4.4 10.9 L11.9 4.1" stroke="#fff3a8" stroke-width="0.9"/><path d="M3.36 10.3 L5.8 12.96 L2 14.2 Z" fill="#f0c690" stroke="#b87828" stroke-width="0.6" stroke-linejoin="round"/><path d="M2 14.2 L2.55 12.6 L3.7 13.7 Z" fill="#2a1a08"/><path d="M11.3 3.1 L12.3 2.2 Q13.3 1.5 14.4 2.5 Q15.3 3.6 14.6 4.6 L13.7 5.7 Z" fill="#f8d4b8" stroke="#c98a2a" stroke-width="0.7"/></svg></div>
<div class="c obj" style="left:82px;top:363px;width:97px;height:23px;padding:0 0 0 4px;"><span class="t tc"><span class="tri"></span>Gustav Klimt</span></div>
<div class="c" style="left:180px;top:363px;width:61px;height:23px;"><span class="t">Klimt</span></div>
<div class="c" style="left:243px;top:363px;width:69px;height:23px;"><span class="t">Gustav</span></div>
<div class="c" style="left:314px;top:363px;width:89px;height:23px;"><span class="t">Demo</span></div>
<div class="c" style="left:405px;top:363px;width:116px;height:23px;"></div>
<div class="c" style="left:563px;top:363px;width:67px;height:23px;"><span class="t">yes</span></div>
<div class="c" style="left:685px;top:363px;width:72px;height:23px;"><span class="b">00010</span></div>
<div class="c" style="left:813px;top:363px;width:67px;height:23px;"></div>
<div class="c" style="left:882px;top:363px;width:92px;height:23px;"></div>
<div class="a" style="left:13px;top:387px;width:26px;height:22px;background:#f0f0f0"></div>
<div class="a" style="left:41px;top:387px;width:39px;height:22px;background:#f0f0f0"></div>
<div class="a" style="left:82px;top:387px;width:97px;height:22px;background:#f0f0f0"></div>
<div class="a" style="left:880px;top:387px;width:94px;height:22px;background:#f0f0f0"></div>
<div class="a" style="left:241px;top:387px;width:1px;height:22px;background:#e9e9e9"></div>
<div class="a" style="left:312px;top:387px;width:1px;height:22px;background:#e9e9e9"></div>
<div class="a" style="left:403px;top:387px;width:1px;height:22px;background:#e9e9e9"></div>
<div class="a" style="left:521px;top:387px;width:1px;height:22px;background:#e9e9e9"></div>
<div class="a" style="left:561px;top:387px;width:1px;height:22px;background:#e9e9e9"></div>
<div class="a" style="left:630px;top:387px;width:1px;height:22px;background:#e9e9e9"></div>
<div class="a" style="left:683px;top:387px;width:1px;height:22px;background:#e9e9e9"></div>
<div class="a" style="left:757px;top:387px;width:1px;height:22px;background:#e9e9e9"></div>
<div class="a" style="left:811px;top:387px;width:1px;height:22px;background:#e9e9e9"></div>
<div class="a" style="left:13px;top:409px;width:26px;height:1px;background:#cdcdcd"></div>
<div class="a" style="left:41px;top:409px;width:39px;height:1px;background:#cdcdcd"></div>
<div class="a" style="left:82px;top:409px;width:892px;height:1px;background:#cdcdcd"></div>
<div class="c" style="left:13px;top:387px;width:26px;height:22px;"><span class="t">012</span></div>
<div class="a" style="left:55px;top:391px"><svg width="16" height="16" viewBox="0 0 16 16" style="display:block"><defs><linearGradient id="pg14" x1="0" y1="0" x2="1" y2="1"><stop offset="0" stop-color="#b4cbf0"/><stop offset="1" stop-color="#7a9fe4"/></linearGradient></defs><rect x="0" y="0" width="12" height="12" fill="url(#pg14)"/><rect x="0.5" y="0.5" width="11" height="11" fill="none" stroke="#6d97e0" stroke-width="1"/><path d="M3.36 10.3 L11.3 3.1 L13.7 5.7 L5.8 12.96 Z" fill="#f6dc50" stroke="#c98a2a" stroke-width="0.8" stroke-linejoin="round"/><path d="M4.4 10.9 L11.9 4.1" stroke="#fff3a8" stroke-width="0.9"/><path d="M3.36 10.3 L5.8 12.96 L2 14.2 Z" fill="#f0c690" stroke="#b87828" stroke-width="0.6" stroke-linejoin="round"/><path d="M2 14.2 L2.55 12.6 L3.7 13.7 Z" fill="#2a1a08"/><path d="M11.3 3.1 L12.3 2.2 Q13.3 1.5 14.4 2.5 Q15.3 3.6 14.6 4.6 L13.7 5.7 Z" fill="#f8d4b8" stroke="#c98a2a" stroke-width="0.7"/></svg></div>
<div class="c obj" style="left:82px;top:387px;width:97px;height:22px;padding:0 0 0 4px;"><span class="t tc"><span class="tri"></span>Gustave Doré</span></div>
<div class="c" style="left:180px;top:387px;width:61px;height:22px;"><span class="t">Doré</span></div>
<div class="c" style="left:243px;top:387px;width:69px;height:22px;"><span class="t">Gustave</span></div>
<div class="c" style="left:314px;top:387px;width:89px;height:22px;"><span class="t">Demo</span></div>
<div class="c" style="left:405px;top:387px;width:116px;height:22px;"></div>
<div class="c" style="left:563px;top:387px;width:67px;height:22px;"><span class="t">yes</span></div>
<div class="c" style="left:685px;top:387px;width:72px;height:22px;"><span class="b">00011</span></div>
<div class="c" style="left:813px;top:387px;width:67px;height:22px;"></div>
<div class="c" style="left:882px;top:387px;width:92px;height:22px;"></div>
<div class="a" style="left:13px;top:420px;width:26px;height:21px;background:#f0f0f0"></div>
<div class="a" style="left:41px;top:420px;width:39px;height:21px;background:#f0f0f0"></div>
<div class="a" style="left:82px;top:420px;width:97px;height:21px;background:#f0f0f0"></div>
<div class="a" style="left:880px;top:420px;width:94px;height:21px;background:#f0f0f0"></div>
<div class="a" style="left:241px;top:420px;width:1px;height:21px;background:#e9e9e9"></div>
<div class="a" style="left:312px;top:420px;width:1px;height:21px;background:#e9e9e9"></div>
<div class="a" style="left:403px;top:420px;width:1px;height:21px;background:#e9e9e9"></div>
<div class="a" style="left:521px;top:420px;width:1px;height:21px;background:#e9e9e9"></div>
<div class="a" style="left:561px;top:420px;width:1px;height:21px;background:#e9e9e9"></div>
<div class="a" style="left:630px;top:420px;width:1px;height:21px;background:#e9e9e9"></div>
<div class="a" style="left:683px;top:420px;width:1px;height:21px;background:#e9e9e9"></div>
<div class="a" style="left:757px;top:420px;width:1px;height:21px;background:#e9e9e9"></div>
<div class="a" style="left:811px;top:420px;width:1px;height:21px;background:#e9e9e9"></div>
<div class="a" style="left:13px;top:441px;width:26px;height:1px;background:#cdcdcd"></div>
<div class="a" style="left:41px;top:441px;width:39px;height:1px;background:#cdcdcd"></div>
<div class="a" style="left:82px;top:441px;width:892px;height:1px;background:#cdcdcd"></div>
<div class="c" style="left:13px;top:420px;width:26px;height:21px;"><span class="t">024</span></div>
<div class="a" style="left:55px;top:423px"><svg width="16" height="16" viewBox="0 0 16 16" style="display:block"><defs><linearGradient id="pg15" x1="0" y1="0" x2="1" y2="1"><stop offset="0" stop-color="#b4cbf0"/><stop offset="1" stop-color="#7a9fe4"/></linearGradient></defs><rect x="0" y="0" width="12" height="12" fill="url(#pg15)"/><rect x="0.5" y="0.5" width="11" height="11" fill="none" stroke="#6d97e0" stroke-width="1"/><path d="M3.36 10.3 L11.3 3.1 L13.7 5.7 L5.8 12.96 Z" fill="#f6dc50" stroke="#c98a2a" stroke-width="0.8" stroke-linejoin="round"/><path d="M4.4 10.9 L11.9 4.1" stroke="#fff3a8" stroke-width="0.9"/><path d="M3.36 10.3 L5.8 12.96 L2 14.2 Z" fill="#f0c690" stroke="#b87828" stroke-width="0.6" stroke-linejoin="round"/><path d="M2 14.2 L2.55 12.6 L3.7 13.7 Z" fill="#2a1a08"/><path d="M11.3 3.1 L12.3 2.2 Q13.3 1.5 14.4 2.5 Q15.3 3.6 14.6 4.6 L13.7 5.7 Z" fill="#f8d4b8" stroke="#c98a2a" stroke-width="0.7"/></svg></div>
<div class="c obj" style="left:82px;top:420px;width:97px;height:21px;padding:0 0 0 4px;"><span class="t tc"><span class="tri"></span>Salvador Dali</span></div>
<div class="c" style="left:180px;top:420px;width:61px;height:21px;"><span class="t">Dali</span></div>
<div class="c" style="left:243px;top:420px;width:69px;height:21px;"><span class="t">Salvador</span></div>
<div class="c" style="left:314px;top:420px;width:89px;height:21px;"><span class="t">Demo</span></div>
<div class="c" style="left:405px;top:420px;width:116px;height:21px;"><span class="t">dali@demo.com</span></div>
<div class="c" style="left:563px;top:420px;width:67px;height:21px;"><span class="t">yes</span></div>
<div class="c" style="left:685px;top:420px;width:72px;height:21px;"><span class="b">00024</span></div>
<div class="c" style="left:813px;top:420px;width:67px;height:21px;"><span class="t">Grenoble</span></div>
<div class="c" style="left:882px;top:420px;width:92px;height:21px;"></div>
<div class="a" style="left:13px;top:442px;width:26px;height:33px;background:#f0f0f0"></div>
<div class="a" style="left:41px;top:442px;width:39px;height:33px;background:#f0f0f0"></div>
<div class="a" style="left:82px;top:442px;width:97px;height:33px;background:#f0f0f0"></div>
<div class="a" style="left:880px;top:442px;width:94px;height:33px;background:#f0f0f0"></div>
<div class="a" style="left:241px;top:442px;width:1px;height:33px;background:#e9e9e9"></div>
<div class="a" style="left:312px;top:442px;width:1px;height:33px;background:#e9e9e9"></div>
<div class="a" style="left:403px;top:442px;width:1px;height:33px;background:#e9e9e9"></div>
<div class="a" style="left:521px;top:442px;width:1px;height:33px;background:#e9e9e9"></div>
<div class="a" style="left:561px;top:442px;width:1px;height:33px;background:#e9e9e9"></div>
<div class="a" style="left:630px;top:442px;width:1px;height:33px;background:#e9e9e9"></div>
<div class="a" style="left:683px;top:442px;width:1px;height:33px;background:#e9e9e9"></div>
<div class="a" style="left:757px;top:442px;width:1px;height:33px;background:#e9e9e9"></div>
<div class="a" style="left:811px;top:442px;width:1px;height:33px;background:#e9e9e9"></div>
<div class="a" style="left:13px;top:475px;width:26px;height:1px;background:#cdcdcd"></div>
<div class="a" style="left:41px;top:475px;width:39px;height:1px;background:#cdcdcd"></div>
<div class="a" style="left:82px;top:475px;width:892px;height:1px;background:#cdcdcd"></div>
<div class="c" style="left:13px;top:442px;width:26px;height:33px;"><span class="t">025</span></div>
<div class="a" style="left:55px;top:451px"><svg width="16" height="16" viewBox="0 0 16 16" style="display:block"><defs><linearGradient id="pg16" x1="0" y1="0" x2="1" y2="1"><stop offset="0" stop-color="#b4cbf0"/><stop offset="1" stop-color="#7a9fe4"/></linearGradient></defs><rect x="0" y="0" width="12" height="12" fill="url(#pg16)"/><rect x="0.5" y="0.5" width="11" height="11" fill="none" stroke="#6d97e0" stroke-width="1"/><path d="M3.36 10.3 L11.3 3.1 L13.7 5.7 L5.8 12.96 Z" fill="#f6dc50" stroke="#c98a2a" stroke-width="0.8" stroke-linejoin="round"/><path d="M4.4 10.9 L11.9 4.1" stroke="#fff3a8" stroke-width="0.9"/><path d="M3.36 10.3 L5.8 12.96 L2 14.2 Z" fill="#f0c690" stroke="#b87828" stroke-width="0.6" stroke-linejoin="round"/><path d="M2 14.2 L2.55 12.6 L3.7 13.7 Z" fill="#2a1a08"/><path d="M11.3 3.1 L12.3 2.2 Q13.3 1.5 14.4 2.5 Q15.3 3.6 14.6 4.6 L13.7 5.7 Z" fill="#f8d4b8" stroke="#c98a2a" stroke-width="0.7"/></svg></div>
<div class="c obj" style="left:82px;top:442px;width:97px;height:33px;padding:0 0 0 4px;"><span class="t tc"><span class="tri"></span>Vassily<br>Kandinski</span></div>
<div class="c" style="left:180px;top:442px;width:61px;height:33px;"><span class="t">Kandinski</span></div>
<div class="c" style="left:243px;top:442px;width:69px;height:33px;"><span class="t">Vassily</span></div>
<div class="c" style="left:314px;top:442px;width:89px;height:33px;"><span class="t">Demo</span></div>
<div class="c" style="left:405px;top:442px;width:116px;height:33px;"></div>
<div class="c" style="left:563px;top:442px;width:67px;height:33px;"><span class="t">no</span></div>
<div class="c" style="left:685px;top:442px;width:72px;height:33px;"><span class="b">00025</span></div>
<div class="c" style="left:813px;top:442px;width:67px;height:33px;"></div>
<div class="c" style="left:882px;top:442px;width:92px;height:33px;"></div>
<div class="a" style="left:13px;top:476px;width:26px;height:23px;background:#f0f0f0"></div>
<div class="a" style="left:41px;top:476px;width:39px;height:23px;background:#f0f0f0"></div>
<div class="a" style="left:82px;top:476px;width:97px;height:23px;background:#f0f0f0"></div>
<div class="a" style="left:880px;top:476px;width:94px;height:23px;background:#f0f0f0"></div>
<div class="a" style="left:241px;top:476px;width:1px;height:23px;background:#e9e9e9"></div>
<div class="a" style="left:312px;top:476px;width:1px;height:23px;background:#e9e9e9"></div>
<div class="a" style="left:403px;top:476px;width:1px;height:23px;background:#e9e9e9"></div>
<div class="a" style="left:521px;top:476px;width:1px;height:23px;background:#e9e9e9"></div>
<div class="a" style="left:561px;top:476px;width:1px;height:23px;background:#e9e9e9"></div>
<div class="a" style="left:630px;top:476px;width:1px;height:23px;background:#e9e9e9"></div>
<div class="a" style="left:683px;top:476px;width:1px;height:23px;background:#e9e9e9"></div>
<div class="a" style="left:757px;top:476px;width:1px;height:23px;background:#e9e9e9"></div>
<div class="a" style="left:811px;top:476px;width:1px;height:23px;background:#e9e9e9"></div>
<div class="a" style="left:13px;top:499px;width:26px;height:1px;background:#cdcdcd"></div>
<div class="a" style="left:41px;top:499px;width:39px;height:1px;background:#cdcdcd"></div>
<div class="a" style="left:82px;top:499px;width:892px;height:1px;background:#cdcdcd"></div>
<div class="c" style="left:13px;top:476px;width:26px;height:23px;"><span class="t">026</span></div>
<div class="a" style="left:55px;top:480px"><svg width="16" height="16" viewBox="0 0 16 16" style="display:block"><defs><linearGradient id="pg17" x1="0" y1="0" x2="1" y2="1"><stop offset="0" stop-color="#b4cbf0"/><stop offset="1" stop-color="#7a9fe4"/></linearGradient></defs><rect x="0" y="0" width="12" height="12" fill="url(#pg17)"/><rect x="0.5" y="0.5" width="11" height="11" fill="none" stroke="#6d97e0" stroke-width="1"/><path d="M3.36 10.3 L11.3 3.1 L13.7 5.7 L5.8 12.96 Z" fill="#f6dc50" stroke="#c98a2a" stroke-width="0.8" stroke-linejoin="round"/><path d="M4.4 10.9 L11.9 4.1" stroke="#fff3a8" stroke-width="0.9"/><path d="M3.36 10.3 L5.8 12.96 L2 14.2 Z" fill="#f0c690" stroke="#b87828" stroke-width="0.6" stroke-linejoin="round"/><path d="M2 14.2 L2.55 12.6 L3.7 13.7 Z" fill="#2a1a08"/><path d="M11.3 3.1 L12.3 2.2 Q13.3 1.5 14.4 2.5 Q15.3 3.6 14.6 4.6 L13.7 5.7 Z" fill="#f8d4b8" stroke="#c98a2a" stroke-width="0.7"/></svg></div>
<div class="c obj" style="left:82px;top:476px;width:97px;height:23px;padding:0 0 0 4px;"><span class="t tc"><span class="tri"></span>Victor Hugo</span></div>
<div class="c" style="left:180px;top:476px;width:61px;height:23px;"><span class="t">Hugo</span></div>
<div class="c" style="left:243px;top:476px;width:69px;height:23px;"><span class="t">Victor</span></div>
<div class="c" style="left:314px;top:476px;width:89px;height:23px;"><span class="t">IT Department</span></div>
<div class="c" style="left:405px;top:476px;width:116px;height:23px;"><span class="t">hugo@it.com</span></div>
<div class="c" style="left:563px;top:476px;width:67px;height:23px;"><span class="t">yes</span></div>
<div class="c" style="left:685px;top:476px;width:72px;height:23px;"><span class="b">00026</span></div>
<div class="c" style="left:813px;top:476px;width:67px;height:23px;"></div>
<div class="c" style="left:882px;top:476px;width:92px;height:23px;"></div>
<div class="a" style="left:13px;top:500px;width:26px;height:33px;background:#f0f0f0"></div>
<div class="a" style="left:41px;top:500px;width:39px;height:33px;background:#f0f0f0"></div>
<div class="a" style="left:82px;top:500px;width:97px;height:33px;background:#f0f0f0"></div>
<div class="a" style="left:880px;top:500px;width:94px;height:33px;background:#f0f0f0"></div>
<div class="a" style="left:241px;top:500px;width:1px;height:33px;background:#e9e9e9"></div>
<div class="a" style="left:312px;top:500px;width:1px;height:33px;background:#e9e9e9"></div>
<div class="a" style="left:403px;top:500px;width:1px;height:33px;background:#e9e9e9"></div>
<div class="a" style="left:521px;top:500px;width:1px;height:33px;background:#e9e9e9"></div>
<div class="a" style="left:561px;top:500px;width:1px;height:33px;background:#e9e9e9"></div>
<div class="a" style="left:630px;top:500px;width:1px;height:33px;background:#e9e9e9"></div>
<div class="a" style="left:683px;top:500px;width:1px;height:33px;background:#e9e9e9"></div>
<div class="a" style="left:757px;top:500px;width:1px;height:33px;background:#e9e9e9"></div>
<div class="a" style="left:811px;top:500px;width:1px;height:33px;background:#e9e9e9"></div>
<div class="a" style="left:13px;top:533px;width:26px;height:1px;background:#cdcdcd"></div>
<div class="a" style="left:41px;top:533px;width:39px;height:1px;background:#cdcdcd"></div>
<div class="a" style="left:82px;top:533px;width:892px;height:1px;background:#cdcdcd"></div>
<div class="c" style="left:13px;top:500px;width:26px;height:33px;"><span class="t">027</span></div>
<div class="a" style="left:55px;top:509px"><svg width="16" height="16" viewBox="0 0 16 16" style="display:block"><defs><linearGradient id="pg18" x1="0" y1="0" x2="1" y2="1"><stop offset="0" stop-color="#b4cbf0"/><stop offset="1" stop-color="#7a9fe4"/></linearGradient></defs><rect x="0" y="0" width="12" height="12" fill="url(#pg18)"/><rect x="0.5" y="0.5" width="11" height="11" fill="none" stroke="#6d97e0" stroke-width="1"/><path d="M3.36 10.3 L11.3 3.1 L13.7 5.7 L5.8 12.96 Z" fill="#f6dc50" stroke="#c98a2a" stroke-width="0.8" stroke-linejoin="round"/><path d="M4.4 10.9 L11.9 4.1" stroke="#fff3a8" stroke-width="0.9"/><path d="M3.36 10.3 L5.8 12.96 L2 14.2 Z" fill="#f0c690" stroke="#b87828" stroke-width="0.6" stroke-linejoin="round"/><path d="M2 14.2 L2.55 12.6 L3.7 13.7 Z" fill="#2a1a08"/><path d="M11.3 3.1 L12.3 2.2 Q13.3 1.5 14.4 2.5 Q15.3 3.6 14.6 4.6 L13.7 5.7 Z" fill="#f8d4b8" stroke="#c98a2a" stroke-width="0.7"/></svg></div>
<div class="c obj" style="left:82px;top:500px;width:97px;height:33px;padding:0 0 0 4px;"><span class="t tc"><span class="tri"></span>Vincent Van<br>Gogh</span></div>
<div class="c" style="left:180px;top:500px;width:61px;height:33px;"><span class="t">Van Gogh</span></div>
<div class="c" style="left:243px;top:500px;width:69px;height:33px;"><span class="t">Vincent</span></div>
<div class="c" style="left:314px;top:500px;width:89px;height:33px;"><span class="t">Demo</span></div>
<div class="c" style="left:405px;top:500px;width:116px;height:33px;"></div>
<div class="c" style="left:563px;top:500px;width:67px;height:33px;"><span class="t">yes</span></div>
<div class="c" style="left:685px;top:500px;width:72px;height:33px;"><span class="b">00027</span></div>
<div class="c" style="left:813px;top:500px;width:67px;height:33px;"></div>
<div class="c" style="left:882px;top:500px;width:92px;height:33px;"></div>
<div class="a" style="left:13px;top:534px;width:26px;height:22px;background:#f0f0f0"></div>
<div class="a" style="left:41px;top:534px;width:39px;height:22px;background:#f0f0f0"></div>
<div class="a" style="left:82px;top:534px;width:97px;height:22px;background:#f0f0f0"></div>
<div class="a" style="left:880px;top:534px;width:94px;height:22px;background:#f0f0f0"></div>
<div class="a" style="left:241px;top:534px;width:1px;height:22px;background:#e9e9e9"></div>
<div class="a" style="left:312px;top:534px;width:1px;height:22px;background:#e9e9e9"></div>
<div class="a" style="left:403px;top:534px;width:1px;height:22px;background:#e9e9e9"></div>
<div class="a" style="left:521px;top:534px;width:1px;height:22px;background:#e9e9e9"></div>
<div class="a" style="left:561px;top:534px;width:1px;height:22px;background:#e9e9e9"></div>
<div class="a" style="left:630px;top:534px;width:1px;height:22px;background:#e9e9e9"></div>
<div class="a" style="left:683px;top:534px;width:1px;height:22px;background:#e9e9e9"></div>
<div class="a" style="left:757px;top:534px;width:1px;height:22px;background:#e9e9e9"></div>
<div class="a" style="left:811px;top:534px;width:1px;height:22px;background:#e9e9e9"></div>
<div class="a" style="left:13px;top:556px;width:26px;height:1px;background:#cdcdcd"></div>
<div class="a" style="left:41px;top:556px;width:39px;height:1px;background:#cdcdcd"></div>
<div class="a" style="left:82px;top:556px;width:892px;height:1px;background:#cdcdcd"></div>
<div class="c" style="left:13px;top:534px;width:26px;height:22px;"><span class="t">028</span></div>
<div class="a" style="left:53px;top:536px"><svg width="17" height="17" viewBox="0 0 17 17" style="display:block"><defs><linearGradient id="pl19" x1="0" y1="0" x2="1" y2="1"><stop offset="0" stop-color="#5b9cf0"/><stop offset="1" stop-color="#3f86e6"/></linearGradient></defs><path d="M5.6 0.6 H10.6 V5.6 H15.6 V10.6 H10.6 V15.6 H5.6 V10.6 H0.6 V5.6 H5.6 Z" fill="url(#pl19)" stroke="#1d52b8" stroke-width="1.2" stroke-linejoin="round"/><path d="M1.6 7 H15" stroke="#9fcaf8" stroke-width="1" opacity="0.8"/><path d="M7 1.6 V15" stroke="#9fcaf8" stroke-width="1" opacity="0.8"/></svg></div>
<div class="c obj" style="left:82px;top:534px;width:97px;height:22px;padding:0 0 0 4px;"><span class="t tc"><span class="tri"></span>Andrew Wyeth</span></div>
<div class="c" style="left:180px;top:534px;width:61px;height:22px;"><span class="t">Wyeth</span></div>
<div class="c" style="left:243px;top:534px;width:69px;height:22px;"><span class="t">Andrew</span></div>
<div class="c" style="left:314px;top:534px;width:89px;height:22px;"><span class="t">Demo</span></div>
<div class="c" style="left:405px;top:534px;width:116px;height:22px;"></div>
<div class="c" style="left:563px;top:534px;width:67px;height:22px;"><span class="t">Undefined</span></div>
<div class="c" style="left:685px;top:534px;width:72px;height:22px;"><span class="t">00028</span></div>
<div class="c" style="left:813px;top:534px;width:67px;height:22px;"></div>
<div class="c" style="left:882px;top:534px;width:92px;height:22px;"><span class="t">Object created</span></div>
<div class="a" style="left:13px;top:557px;width:26px;height:23px;background:#f0f0f0"></div>
<div class="a" style="left:41px;top:557px;width:39px;height:23px;background:#f0f0f0"></div>
<div class="a" style="left:82px;top:557px;width:97px;height:23px;background:#f0f0f0"></div>
<div class="a" style="left:880px;top:557px;width:94px;height:23px;background:#f0f0f0"></div>
<div class="a" style="left:241px;top:557px;width:1px;height:23px;background:#e9e9e9"></div>
<div class="a" style="left:312px;top:557px;width:1px;height:23px;background:#e9e9e9"></div>
<div class="a" style="left:403px;top:557px;width:1px;height:23px;background:#e9e9e9"></div>
<div class="a" style="left:521px;top:557px;width:1px;height:23px;background:#e9e9e9"></div>
<div class="a" style="left:561px;top:557px;width:1px;height:23px;background:#e9e9e9"></div>
<div class="a" style="left:630px;top:557px;width:1px;height:23px;background:#e9e9e9"></div>
<div class="a" style="left:683px;top:557px;width:1px;height:23px;background:#e9e9e9"></div>
<div class="a" style="left:757px;top:557px;width:1px;height:23px;background:#e9e9e9"></div>
<div class="a" style="left:811px;top:557px;width:1px;height:23px;background:#e9e9e9"></div>
<div class="a" style="left:13px;top:580px;width:26px;height:1px;background:#cdcdcd"></div>
<div class="a" style="left:41px;top:580px;width:39px;height:1px;background:#cdcdcd"></div>
<div class="a" style="left:82px;top:580px;width:892px;height:1px;background:#cdcdcd"></div>
<div class="c" style="left:13px;top:557px;width:26px;height:23px;"><span class="t">029</span></div>
<div class="a" style="left:53px;top:559px"><svg width="17" height="17" viewBox="0 0 17 17" style="display:block"><defs><linearGradient id="pl20" x1="0" y1="0" x2="1" y2="1"><stop offset="0" stop-color="#5b9cf0"/><stop offset="1" stop-color="#3f86e6"/></linearGradient></defs><path d="M5.6 0.6 H10.6 V5.6 H15.6 V10.6 H10.6 V15.6 H5.6 V10.6 H0.6 V5.6 H5.6 Z" fill="url(#pl20)" stroke="#1d52b8" stroke-width="1.2" stroke-linejoin="round"/><path d="M1.6 7 H15" stroke="#9fcaf8" stroke-width="1" opacity="0.8"/><path d="M7 1.6 V15" stroke="#9fcaf8" stroke-width="1" opacity="0.8"/></svg></div>
<div class="c obj" style="left:82px;top:557px;width:97px;height:23px;padding:0 0 0 4px;"><span class="t tc"><span class="tri"></span>Andy Warhol</span></div>
<div class="c" style="left:180px;top:557px;width:61px;height:23px;"><span class="t">Warhol</span></div>
<div class="c" style="left:243px;top:557px;width:69px;height:23px;"><span class="t">Andy</span></div>
<div class="c" style="left:314px;top:557px;width:89px;height:23px;"><span class="t">Demo</span></div>
<div class="c" style="left:405px;top:557px;width:116px;height:23px;"></div>
<div class="c" style="left:563px;top:557px;width:67px;height:23px;"><span class="t">Undefined</span></div>
<div class="c" style="left:685px;top:557px;width:72px;height:23px;"><span class="t">00029</span></div>
<div class="c" style="left:813px;top:557px;width:67px;height:23px;"></div>
<div class="c" style="left:882px;top:557px;width:92px;height:23px;"><span class="t">Object created</span></div>
<div class="a" style="left:13px;top:581px;width:26px;height:22px;background:#f0f0f0"></div>
<div class="a" style="left:41px;top:581px;width:39px;height:22px;background:#f0f0f0"></div>
<div class="a" style="left:82px;top:581px;width:97px;height:22px;background:#f0f0f0"></div>
<div class="a" style="left:880px;top:581px;width:94px;height:22px;background:#f0f0f0"></div>
<div class="a" style="left:241px;top:581px;width:1px;height:22px;background:#e9e9e9"></div>
<div class="a" style="left:312px;top:581px;width:1px;height:22px;background:#e9e9e9"></div>
<div class="a" style="left:403px;top:581px;width:1px;height:22px;background:#e9e9e9"></div>
<div class="a" style="left:521px;top:581px;width:1px;height:22px;background:#e9e9e9"></div>
<div class="a" style="left:561px;top:581px;width:1px;height:22px;background:#e9e9e9"></div>
<div class="a" style="left:630px;top:581px;width:1px;height:22px;background:#e9e9e9"></div>
<div class="a" style="left:683px;top:581px;width:1px;height:22px;background:#e9e9e9"></div>
<div class="a" style="left:757px;top:581px;width:1px;height:22px;background:#e9e9e9"></div>
<div class="a" style="left:811px;top:581px;width:1px;height:22px;background:#e9e9e9"></div>
<div class="a" style="left:13px;top:603px;width:26px;height:1px;background:#cdcdcd"></div>
<div class="a" style="left:41px;top:603px;width:39px;height:1px;background:#cdcdcd"></div>
<div class="a" style="left:82px;top:603px;width:892px;height:1px;background:#cdcdcd"></div>
<div class="c" style="left:13px;top:581px;width:26px;height:22px;"><span class="t">030</span></div>
<div class="a" style="left:53px;top:583px"><svg width="17" height="17" viewBox="0 0 17 17" style="display:block"><defs><linearGradient id="pl21" x1="0" y1="0" x2="1" y2="1"><stop offset="0" stop-color="#5b9cf0"/><stop offset="1" stop-color="#3f86e6"/></linearGradient></defs><path d="M5.6 0.6 H10.6 V5.6 H15.6 V10.6 H10.6 V15.6 H5.6 V10.6 H0.6 V5.6 H5.6 Z" fill="url(#pl21)" stroke="#1d52b8" stroke-width="1.2" stroke-linejoin="round"/><path d="M1.6 7 H15" stroke="#9fcaf8" stroke-width="1" opacity="0.8"/><path d="M7 1.6 V15" stroke="#9fcaf8" stroke-width="1" opacity="0.8"/></svg></div>
<div class="c obj" style="left:82px;top:581px;width:97px;height:22px;padding:0 0 0 4px;"><span class="t tc"><span class="tri"></span>Wood Grant</span></div>
<div class="c" style="left:180px;top:581px;width:61px;height:22px;"><span class="t">Grant</span></div>
<div class="c" style="left:243px;top:581px;width:69px;height:22px;"><span class="t">Wood</span></div>
<div class="c" style="left:314px;top:581px;width:89px;height:22px;"><span class="t">Demo</span></div>
<div class="c" style="left:405px;top:581px;width:116px;height:22px;"></div>
<div class="c" style="left:563px;top:581px;width:67px;height:22px;"><span class="t">Undefined</span></div>
<div class="c" style="left:685px;top:581px;width:72px;height:22px;"><span class="t">00030</span></div>
<div class="c" style="left:813px;top:581px;width:67px;height:22px;"></div>
<div class="c" style="left:882px;top:581px;width:92px;height:22px;"><span class="t">Object created</span></div>
<div class="a" style="left:13px;top:604px;width:26px;height:57px;background:#f0f0f0"></div>
<div class="a" style="left:41px;top:604px;width:39px;height:57px;background:#f0f0f0"></div>
<div class="a" style="left:82px;top:604px;width:97px;height:57px;background:#f0f0f0"></div>
<div class="a" style="left:179px;top:604px;width:701px;height:57px;background:#ffdcdc"></div>
<div class="a" style="left:880px;top:604px;width:94px;height:57px;background:#f0f0f0"></div>
<div class="a" style="left:241px;top:604px;width:1px;height:57px;background:#e9e9e9"></div>
<div class="a" style="left:312px;top:604px;width:1px;height:57px;background:#e9e9e9"></div>
<div class="a" style="left:403px;top:604px;width:1px;height:57px;background:#e9e9e9"></div>
<div class="a" style="left:521px;top:604px;width:1px;height:57px;background:#e9e9e9"></div>
<div class="a" style="left:561px;top:604px;width:1px;height:57px;background:#e9e9e9"></div>
<div class="a" style="left:630px;top:604px;width:1px;height:57px;background:#e9e9e9"></div>
<div class="a" style="left:683px;top:604px;width:1px;height:57px;background:#e9e9e9"></div>
<div class="a" style="left:757px;top:604px;width:1px;height:57px;background:#e9e9e9"></div>
<div class="a" style="left:811px;top:604px;width:1px;height:57px;background:#e9e9e9"></div>
<div class="a" style="left:13px;top:661px;width:26px;height:1px;background:#cdcdcd"></div>
<div class="a" style="left:41px;top:661px;width:39px;height:1px;background:#cdcdcd"></div>
<div class="a" style="left:82px;top:661px;width:892px;height:1px;background:#cdcdcd"></div>
<div class="c" style="left:13px;top:604px;width:26px;height:57px;"><span class="t">031</span></div>
<div class="a" style="left:53px;top:623px"><svg width="17" height="15" viewBox="0 0 17 15" style="display:block"><defs><linearGradient id="wg22" x1="0" y1="0" x2="0" y2="1"><stop offset="0" stop-color="#fff2a0"/><stop offset="1" stop-color="#fcc62a"/></linearGradient></defs><path d="M8.5 1 L16 13.6 H1 Z" fill="url(#wg22)" stroke="#d2822a" stroke-width="1.4" stroke-linejoin="round"/><rect x="7.6" y="4.6" width="1.8" height="4.6" fill="#1e2c6e"/><rect x="7.6" y="10" width="1.8" height="1.8" fill="#1e2c6e"/></svg></div>
<div class="c" style="left:180px;top:604px;width:61px;height:57px;"><span class="t">Albert</span></div>
<div class="c" style="left:243px;top:604px;width:69px;height:57px;"><span class="t">Bierstadt</span></div>
<div class="c" style="left:314px;top:604px;width:89px;height:57px;"><span class="t" style="line-height:25px;margin-top:-12px">zzDemozz<br>No match</span></div>
<div class="c" style="left:405px;top:604px;width:116px;height:57px;"></div>
<div class="c" style="left:563px;top:604px;width:67px;height:57px;"></div>
<div class="c" style="left:685px;top:604px;width:72px;height:57px;"><span class="t">00031</span></div>
<div class="c" style="left:813px;top:604px;width:67px;height:57px;"></div>
<div class="c" style="left:882px;top:604px;width:92px;height:57px;color:#d0101a;font-weight:bold;font-size:12.5px;line-height:14px;white-space:nowrap">Issue: failed<br>to reconcile</div>
<div class="a" style="left:13px;top:410px;width:26px;height:10px;background:#f0f0f0"></div>
<div class="a" style="left:41px;top:410px;width:39px;height:10px;background:#f0f0f0"></div>
<div class="a" style="left:82px;top:410px;width:97px;height:10px;background:#f0f0f0"></div>
<div class="a" style="left:880px;top:410px;width:94px;height:10px;background:#f0f0f0"></div>
<div class="a" style="left:241px;top:410px;width:1px;height:10px;background:#e9e9e9"></div>
<div class="a" style="left:312px;top:410px;width:1px;height:10px;background:#e9e9e9"></div>
<div class="a" style="left:403px;top:410px;width:1px;height:10px;background:#e9e9e9"></div>
<div class="a" style="left:521px;top:410px;width:1px;height:10px;background:#e9e9e9"></div>
<div class="a" style="left:561px;top:410px;width:1px;height:10px;background:#e9e9e9"></div>
<div class="a" style="left:630px;top:410px;width:1px;height:10px;background:#e9e9e9"></div>
<div class="a" style="left:683px;top:410px;width:1px;height:10px;background:#e9e9e9"></div>
<div class="a" style="left:757px;top:410px;width:1px;height:10px;background:#e9e9e9"></div>
<div class="a" style="left:811px;top:410px;width:1px;height:10px;background:#e9e9e9"></div>
<div class="a" style="left:0;top:400px;width:984px;height:30px;clip-path:polygon(0.0px 12.0px, 7.6px 19.0px, 13.3px 15.0px, 20.3px 18.5px, 26.7px 13.7px, 32.4px 18.4px, 38.1px 15.0px, 45.0px 21.0px, 49.5px 17.8px, 55.9px 22.2px, 64.2px 15.9px, 71.8px 20.3px, 78.8px 17.0px, 83.8px 19.0px, 90.2px 15.0px, 94.7px 18.4px, 104.8px 12.7px, 106.7px 17.8px, 113.0px 15.2px, 119.4px 17.8px, 128.0px 15.5px, 137.0px 17.5px, 145.7px 15.0px, 152.6px 16.8px, 161.0px 15.2px, 165.5px 19.0px, 171.6px 16.5px, 179.3px 19.8px, 186.0px 16.5px, 192.0px 20.0px, 199.0px 14.0px, 205.0px 20.0px, 212.0px 14.0px, 219.0px 20.0px, 226.5px 14.0px, 234.0px 20.0px, 238.7px 15.0px, 246.0px 21.0px, 255.0px 16.3px, 266.4px 13.8px, 270.5px 16.7px, 277.6px 15.2px, 286.7px 20.0px, 295.9px 14.2px, 305.0px 19.3px, 312.0px 16.3px, 319.3px 20.0px, 325.4px 16.7px, 330.4px 18.7px, 339.6px 15.2px, 349.8px 20.3px, 357.9px 16.7px, 367.0px 20.7px, 375.0px 14.2px, 382.3px 17.9px, 386.3px 15.9px, 398.5px 23.4px, 408.7px 16.3px, 413.8px 17.9px, 418.9px 14.6px, 430.0px 20.3px, 438.1px 15.2px, 446.3px 19.3px, 455.4px 14.6px, 462.5px 18.7px, 468.6px 15.9px, 478.8px 19.9px, 484.9px 14.6px, 492.0px 19.3px, 496.0px 15.9px, 500.0px 17.9px, 505.2px 13.2px, 510.3px 15.9px, 516.4px 13.8px, 525.5px 22.0px, 531.6px 17.3px, 540.8px 22.4px, 544.8px 19.3px, 551.0px 22.8px, 558.0px 16.7px, 563.1px 20.7px, 570.2px 15.9px, 578.4px 19.3px, 586.5px 17.3px, 593.6px 20.7px, 596.7px 15.9px, 602.8px 19.3px, 610.0px 15.2px, 617.0px 20.7px, 623.1px 15.2px, 627.1px 20.3px, 632.2px 17.3px, 640.3px 20.3px, 645.4px 17.9px, 655.6px 25.4px, 661.7px 17.3px, 668.8px 22.0px, 672.8px 19.3px, 676.9px 22.0px, 689.1px 14.2px, 696.2px 19.9px, 705.4px 13.2px, 713.5px 19.9px, 721.6px 16.3px, 729.8px 24.0px, 735.9px 17.9px, 739.9px 22.0px, 748.0px 18.7px, 757.2px 23.4px, 764.3px 18.7px, 772.4px 23.4px, 780.6px 18.7px, 790.7px 24.0px, 799.9px 17.3px, 806.0px 21.3px, 810.0px 17.3px, 817.1px 22.4px, 825.0px 16.6px, 833.9px 24.2px, 841.8px 18.0px, 848.9px 23.3px, 856.9px 18.0px, 864.8px 23.3px, 873.7px 16.6px, 881.6px 22.9px, 888.7px 17.1px, 900.2px 23.3px, 908.1px 15.3px, 921.4px 21.9px, 927.6px 16.2px, 935.6px 24.2px, 941.7px 17.1px, 947.9px 21.2px, 953.2px 17.1px, 960.3px 22.4px, 964.7px 18.0px, 975.3px 25.9px, 984.0px 25.9px, 984px 30px, 0px 30px)">
<div class="a" style="left:58px;top:14px;width:6px;height:8px;background:#7aa2e6;border:1px solid #6d97e0"></div>
<div class="a" style="left:104px;top:9px;line-height:14px;color:#1c94c4;white-space:nowrap"><span class="t"><span class="tri"></span>Gustave Courbet</span></div>
</div>
<div class="a" style="left:14px;top:679px;width:76px;height:21px;border:1px solid #707070;border-radius:3px;background:linear-gradient(#f2f2f2 0%,#ebebeb 50%,#dddddd 50%,#cfcfcf 100%);font-size:13px;line-height:19px;text-align:center;color:#000">&lt;&lt; Back</div>
<div class="a" style="left:101px;top:679px;width:59px;height:21px;border:1px solid #3c7fb1;border-radius:3px;box-shadow:inset 0 0 0 1px #62d0f4;background:linear-gradient(#f2f2f2 0%,#ebebeb 50%,#dddddd 50%,#cfcfcf 100%);font-size:13px;line-height:19px;text-align:center;color:#000">Done</div>
<div class="a" style="left:3px;top:727px;width:162px;height:13px;border:1px dotted #222"></div>
<div class="a" style="left:6px;top:733px;width:0;height:0;border-top:4px solid #ef9a12;border-left:3.5px solid transparent;border-right:3.5px solid transparent"></div>
<div class="a" style="left:19px;top:727px;font-size:11px;line-height:14px;color:#e68a00;white-space:nowrap;letter-spacing:-0.15px">Lines that could not be loaded:</div>
<div class="a" style="left:4px;top:755px;font-size:13px;line-height:16px;color:#111;white-space:nowrap;letter-spacing:0.14px">The following lines have not been imported because they contain errors</div>
<div class="a" style="left:3px;top:784px;width:823px;height:130px;background:#fff;border:1px solid #b6cde4;border-top-color:#6e9dcf"></div>
<div class="a" style="left:809px;top:785px;width:16px;height:120px;background:#f0f0f0;border-left:1px solid #e8e8e8"></div>
<div class="a" style="left:813px;top:791px;width:0;height:0;border-bottom:4px solid #8e8e8e;border-left:4px solid transparent;border-right:4px solid transparent"></div>
<div class="a" style="left:6px;top:787px;font-family:'Liberation Mono',monospace;font-size:13.33px;line-height:15px;white-space:pre;color:#333">&#x27;Name*&#x27; &#x27;First Name*&#x27;   &#x27;Organization-&gt;Name*&#x27;   &#x27;Email&#x27; &#x27;Phone&#x27; &#x27;Notification&#x27;  &#x27;Function&#x27;
        &#x27;Employee number&#x27;       &#x27;Mobile phone&#x27;  &#x27;Location-&gt;Name*&#x27;
&#x27;Albert&#x27;        &#x27;Bierstadt&#x27;     &#x27;zzDemozz&#x27;      &#x27;&#x27;      &#x27;&#x27;      &#x27;&#x27;      &#x27;&#x27;      &#x27;00031&#x27; &#x27;&#x27;      &#x27;&#x27;</div>
<svg class="a" style="left:0;top:0" width="984" height="901" viewBox="0 0 984 901"><line x1="312.5" y1="649.7" x2="222" y2="709" stroke="#ff0000" stroke-width="2.6" stroke-linecap="round"/><path d="M211.3 716.2 L220.6 704.8 L226.2 713 Z" fill="#ff0000" stroke="#ff0000" stroke-width="1" stroke-linejoin="round"/><ellipse cx="106.3" cy="731.5" rx="103.6" ry="23.5" fill="none" stroke="#ff0000" stroke-width="3.4"/></svg>
<svg class="a" style="left:0;top:0" width="984" height="901" viewBox="0 0 984 901"><defs><filter id="tsh" filterUnits="userSpaceOnUse" x="-10" y="400" width="1010" height="45"><feOffset in="SourceAlpha" dx="0.8" dy="4" result="o2"/><feGaussianBlur in="o2" stdDeviation="3.2" result="b2"/><feComponentTransfer in="b2" result="c2"><feFuncA type="linear" slope="1.6"/></feComponentTransfer><feComposite in="c2" in2="SourceAlpha" operator="out"/></filter></defs><polygon points="-10,380 -10,412 0.0,412.0 7.6,419.0 13.3,415.0 20.3,418.5 26.7,413.7 32.4,418.4 38.1,415.0 45.0,421.0 49.5,417.8 55.9,422.2 64.2,415.9 71.8,420.3 78.8,417.0 83.8,419.0 90.2,415.0 94.7,418.4 104.8,412.7 106.7,417.8 113.0,415.2 119.4,417.8 128.0,415.5 137.0,417.5 145.7,415.0 152.6,416.8 161.0,415.2 165.5,419.0 171.6,416.5 179.3,419.8 186.0,416.5 192.0,420.0 199.0,414.0 205.0,420.0 212.0,414.0 219.0,420.0 226.5,414.0 234.0,420.0 238.7,415.0 246.0,421.0 255.0,416.3 266.4,413.8 270.5,416.7 277.6,415.2 286.7,420.0 295.9,414.2 305.0,419.3 312.0,416.3 319.3,420.0 325.4,416.7 330.4,418.7 339.6,415.2 349.8,420.3 357.9,416.7 367.0,420.7 375.0,414.2 382.3,417.9 386.3,415.9 398.5,423.4 408.7,416.3 413.8,417.9 418.9,414.6 430.0,420.3 438.1,415.2 446.3,419.3 455.4,414.6 462.5,418.7 468.6,415.9 478.8,419.9 484.9,414.6 492.0,419.3 496.0,415.9 500.0,417.9 505.2,413.2 510.3,415.9 516.4,413.8 525.5,422.0 531.6,417.3 540.8,422.4 544.8,419.3 551.0,422.8 558.0,416.7 563.1,420.7 570.2,415.9 578.4,419.3 586.5,417.3 593.6,420.7 596.7,415.9 602.8,419.3 610.0,415.2 617.0,420.7 623.1,415.2 627.1,420.3 632.2,417.3 640.3,420.3 645.4,417.9 655.6,425.4 661.7,417.3 668.8,422.0 672.8,419.3 676.9,422.0 689.1,414.2 696.2,419.9 705.4,413.2 713.5,419.9 721.6,416.3 729.8,424.0 735.9,417.9 739.9,422.0 748.0,418.7 757.2,423.4 764.3,418.7 772.4,423.4 780.6,418.7 790.7,424.0 799.9,417.3 806.0,421.3 810.0,417.3 817.1,422.4 825.0,416.6 833.9,424.2 841.8,418.0 848.9,423.3 856.9,418.0 864.8,423.3 873.7,416.6 881.6,422.9 888.7,417.1 900.2,423.3 908.1,415.3 921.4,421.9 927.6,416.2 935.6,424.2 941.7,417.1 947.9,421.2 953.2,417.1 960.3,422.4 964.7,418.0 975.3,425.9 984.0,425.9 995,425.9 995,380" fill="#000" filter="url(#tsh)"/></svg>
</body></html>
